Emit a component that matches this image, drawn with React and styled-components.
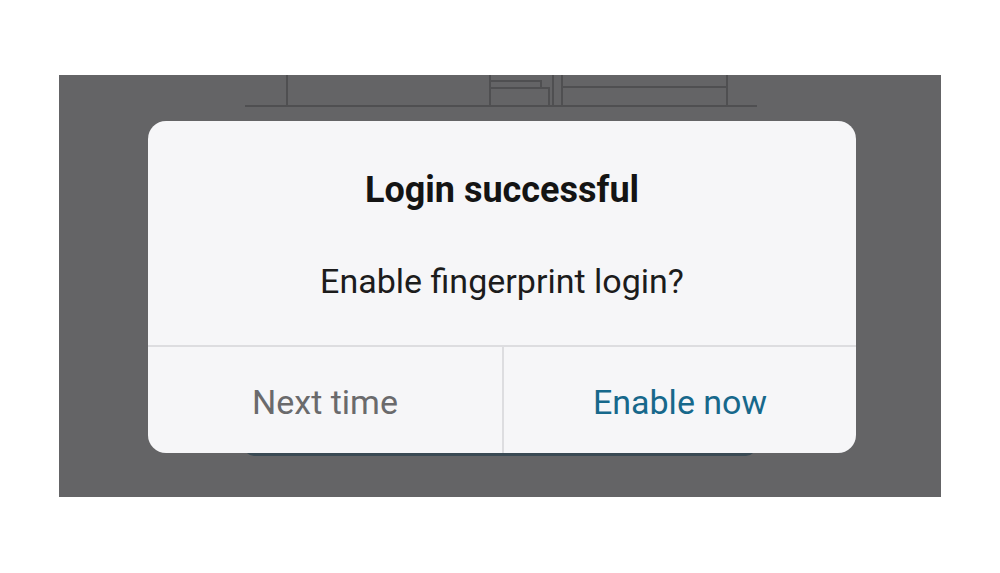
import styled, { createGlobalStyle } from 'styled-components';

const GlobalStyle = createGlobalStyle`
  html, body {
    margin: 0;
    padding: 0;
    background: #ffffff;
  }
  body {
    font-family: 'Roboto', 'Noto Sans', sans-serif;
  }
`;

const Page = styled.div`
  width: 1000px;
  height: 573px;
  padding: 75px 59px 0;
  box-sizing: border-box;
`;

const Scrim = styled.div`
  position: relative;
  width: 882px;
  height: 422px;
  background: #646466;
  display: flex;
  flex-direction: column;
  align-items: center;
  overflow: hidden;
`;

const Sketch = styled.svg`
  display: block;
  width: 882px;
  height: 40px;
  flex-shrink: 0;
`;

const HiddenButton = styled.div`
  margin-top: 301px;
  width: 512px;
  height: 40px;
  border-radius: 0 0 10px 10px;
  background: #3a4a54;
`;

const Dialog = styled.div`
  position: absolute;
  left: 89px;
  top: 46px;
  width: 708px;
  height: 332px;
  background: #f6f6f8;
  border-radius: 18px;
  display: flex;
  flex-direction: column;
  overflow: hidden;
`;

const Body = styled.div`
  height: 224px;
  padding-top: 49px;
  box-sizing: border-box;
  display: flex;
  flex-direction: column;
  align-items: center;
  gap: 51px;
`;

const Title = styled.div`
  font-size: 36px;
  line-height: 40px;
  font-weight: 700;
  color: #141414;
`;

const Message = styled.div`
  font-size: 34px;
  line-height: 40px;
  color: #1c1c1c;
`;

const Footer = styled.div`
  flex: 1;
  display: grid;
  grid-template-columns: 1fr 1fr;
  border-top: 2px solid #dddde0;
`;

const Action = styled.button`
  border: none;
  background: transparent;
  font-family: 'Roboto', 'Noto Sans', sans-serif;
  font-size: 34px;
  padding: 4px 0 0;
  color: ${(p) => (p.$primary ? '#17688b' : '#6a6a6c')};
  border-left: ${(p) => (p.$primary ? '2px solid #dddde0' : 'none')};
  cursor: pointer;
`;

function App() {
  return (
    <>
      <GlobalStyle />
      <Page>
        <Scrim>
          <Sketch viewBox='0 0 882 40'>
            <g stroke='#4f4f51' strokeWidth='2' fill='none'>
              <line x1='186' y1='31' x2='698' y2='31' />
              <line x1='228' y1='0' x2='228' y2='31' />
              <polyline points='431,0 431,31' />
              <polyline points='431,6 482,6 482,13' />
              <polyline points='431,13 490,13 490,31' />
              <line x1='494' y1='0' x2='494' y2='31' />
              <line x1='503' y1='0' x2='503' y2='31' />
              <line x1='503' y1='12' x2='668' y2='12' />
              <line x1='668' y1='0' x2='668' y2='31' />
            </g>
          </Sketch>
          <HiddenButton />
          <Dialog>
            <Body>
              <Title>Login successful</Title>
              <Message>Enable fingerprint login?</Message>
            </Body>
            <Footer>
              <Action>Next time</Action>
              <Action $primary>Enable now</Action>
            </Footer>
          </Dialog>
        </Scrim>
      </Page>
    </>
  );
}

export default App;
